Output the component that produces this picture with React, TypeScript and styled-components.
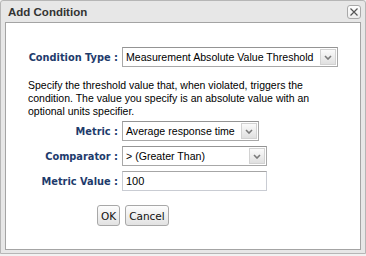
import React from 'react';
import styled, { createGlobalStyle } from 'styled-components';

const GlobalStyle = createGlobalStyle`
  html, body {
    margin: 0;
    padding: 0;
    background: #f2f2f2;
  }
  * {
    box-sizing: border-box;
  }
`;

const Dialog = styled.div`
  width: 366px;
  height: 254px;
  display: flex;
  flex-direction: column;
  padding: 0 4px 3px 4px;
  background: #e7e7e7;
  border: 1px solid #b6b6b6;
  border-radius: 3px 3px 0 0;
`;

const TitleBar = styled.div`
  height: 21px;
  display: flex;
  align-items: center;
  justify-content: space-between;
  padding-left: 3px;
`;

const Title = styled.span`
  font-family: 'Liberation Sans', Arial, sans-serif;
  font-weight: bold;
  font-size: 11.5px;
  color: #333;
`;

const CloseButton = styled.button`
  width: 14px;
  height: 14px;
  padding: 0;
  display: flex;
  align-items: center;
  justify-content: center;
  border: 1px solid #a9a9a9;
  border-radius: 3px;
  background: linear-gradient(#fdfdfd, #ededed);
`;

const Panel = styled.div`
  flex: 1;
  background: #fff;
  border: 1px solid #a4a4a4;
`;

const Row = styled.div<{ $top: number }>`
  display: flex;
  align-items: center;
  margin-top: ${(p) => p.$top}px;
`;

const Label = styled.label`
  width: 112px;
  margin-right: 4px;
  text-align: right;
  font-family: 'DejaVu Sans', Verdana, sans-serif;
  font-weight: bold;
  font-size: 9.8px;
  color: #1e3b6c;
  white-space: nowrap;
`;

const SelectBox = styled.div<{ $w: number }>`
  width: ${(p) => p.$w}px;
  height: 20px;
  display: flex;
  background: #fff;
  border: 1px solid #a8a8a8;
  border-top-color: #949494;
`;

const SelectValue = styled.span`
  flex: 1;
  padding-left: 3px;
  font-family: 'Liberation Sans', Arial, sans-serif;
  font-size: 10.6px;
  line-height: 18px;
  color: #000;
  white-space: nowrap;
  overflow: hidden;
`;

const ArrowButton = styled.span`
  width: 16px;
  margin: 1px;
  display: flex;
  align-items: center;
  justify-content: center;
  border: 1px solid #d2d2d2;
  background: linear-gradient(#fbfbfb, #e0e0e0);
`;

const TextInput = styled.input`
  width: 145px;
  height: 20px;
  padding: 0 3px;
  border: 1px solid #c9ccd3;
  border-top-color: #a6a6a6;
  font-family: 'Liberation Sans', Arial, sans-serif;
  font-size: 11px;
  color: #000;
  outline: none;
`;

const Description = styled.p`
  margin: 12px 19px 0 22px;
  font-family: 'Liberation Sans', Arial, sans-serif;
  font-size: 10.5px;
  line-height: 13px;
  color: #000;
`;

const ButtonRow = styled.div`
  display: flex;
  gap: 5px;
  margin-top: 14px;
  padding-left: 91px;
`;

const Button = styled.button`
  height: 21px;
  padding: 0 3px;
  border: 1px solid #a8a8a8;
  border-radius: 3px;
  background: linear-gradient(#fdfdfd, #e2e2e2);
  font-family: 'DejaVu Sans', Verdana, sans-serif;
  font-size: 10.5px;
  color: #111;
`;

const Chevron = () => (
  <svg width="8" height="5" viewBox="0 0 8 5">
    <path d="M1 1 L4 4 L7 1" fill="none" stroke="#7a7a7a" strokeWidth="1.6" />
  </svg>
);

const Select: React.FC<{ value: string; width: number }> = ({ value, width }) => (
  <SelectBox $w={width}>
    <SelectValue>{value}</SelectValue>
    <ArrowButton>
      <Chevron />
    </ArrowButton>
  </SelectBox>
);

const App: React.FC = () => {
  return (
    <>
      <GlobalStyle />
      <Dialog>
        <TitleBar>
          <Title>Add Condition</Title>
          <CloseButton aria-label="Close">
            <svg width="8" height="8" viewBox="0 0 8 8">
              <path d="M0.5 0.5 L7.5 7.5 M7.5 0.5 L0.5 7.5" stroke="#555" strokeWidth="1.2" />
            </svg>
          </CloseButton>
        </TitleBar>
        <Panel>
          <Row $top={24}>
            <Label>Condition Type :</Label>
            <Select value="Measurement Absolute Value Threshold" width={216} />
          </Row>
          <Description>
            Specify the threshold value that, when violated, triggers the condition. The value you
            specify is an absolute value with an optional units specifier.
          </Description>
          <Row $top={3}>
            <Label>Metric :</Label>
            <Select value="Average response time" width={137} />
          </Row>
          <Row $top={5}>
            <Label>Comparator :</Label>
            <Select value="> (Greater Than)" width={145} />
          </Row>
          <Row $top={5}>
            <Label>Metric Value :</Label>
            <TextInput defaultValue="100" />
          </Row>
          <ButtonRow>
            <Button>OK</Button>
            <Button>Cancel</Button>
          </ButtonRow>
        </Panel>
      </Dialog>
    </>
  );
};

export default App;
